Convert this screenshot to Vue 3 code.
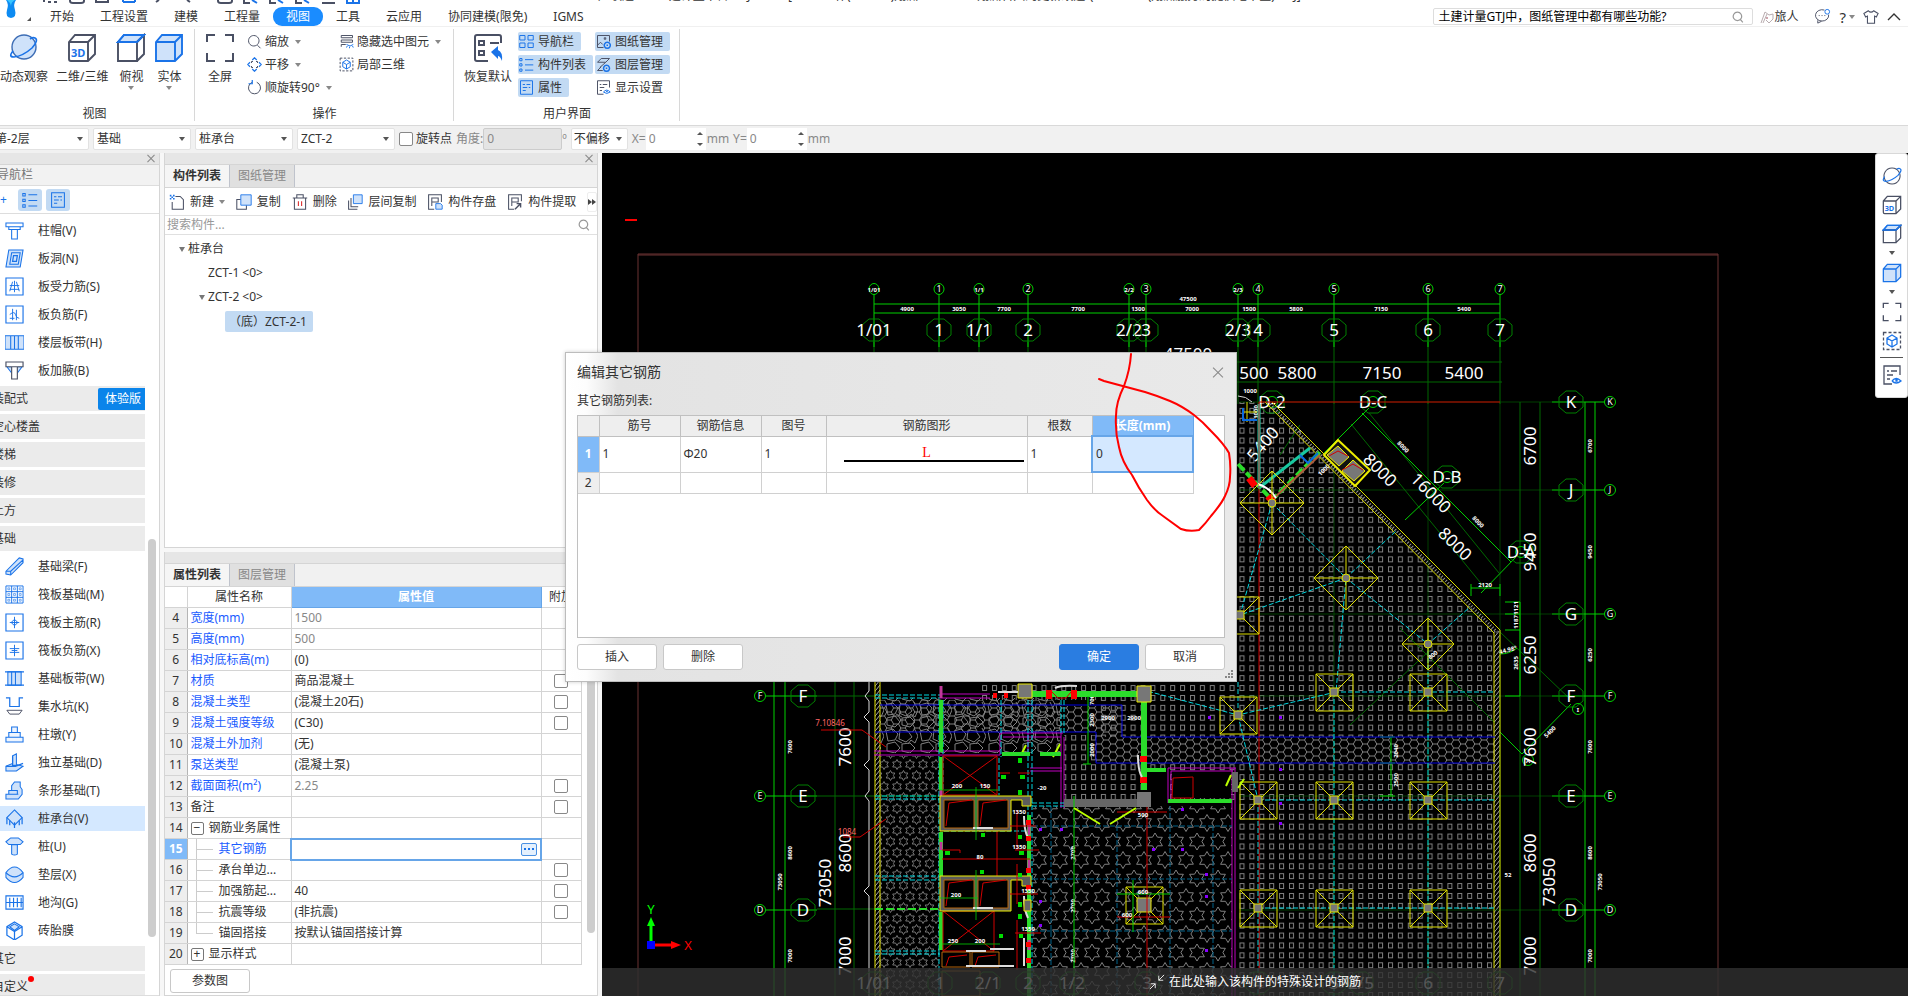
<template>
  <div class="app">
    <!-- Title strip and menu tabs -->
    <header class="topbar">
      <div class="title-strip">
        <svg class="quick-icons" viewBox="0 0 360 4" width="360" height="4" fill="none" stroke="#4a5064" stroke-width="2">
          <path d="M44 0v2M48 2h3M54 2h3M70 0v1q0 2 3 2h8q3 0 3-2V0M96 0v2h12V0M156 2l3-2M187 0l3 2M218 0v1q0 2 3 2h8q3 0 3-2V0M322 3h13M380 0v3h10" />
          <path stroke="#1a73e8" d="M123 2h12M123 0v2M135 0v2M252 0l5 3M278 0l5 3M304 0l5 3M347 0v3h12V0M353 0v3" />
          <path d="M244 0v3h6M270 0v3h6M296 0v3h6" />
        </svg>
        <span class="title-text">广联达BIM土建计量平台 GTJ2021 - [D:\2#工作(1#2-1#)翔洲\2022.4.19翔洲科兴湾更新改造\(2022.4.19(翔洲服务局提供地下室).GTJ]</span>
      </div>
      <svg class="logo" viewBox="0 0 12 18" width="12" height="18">
        <path fill="#0d8bf2" d="M1 0q3 4 1 10q-2 7 4 8q6-1 4-8q-2-6 1-10z" />
        <path fill="#37c6ff" d="M2 0h8q-4 2-4 6q-1-4-4-6z" />
      </svg>
      <span class="corner"></span>
      <nav class="tabs">
        <button v-for="t in menuTabs" :key="t" class="tab" :class="{ active: t === '视图' }">{{ t }}</button>
      </nav>
      <div class="top-right">
        <label class="help-search">
          <input v-model="helpQuery" type="text" aria-label="搜索" />
          <svg viewBox="0 0 20 20" width="12" height="12" v-html="icons.search"></svg>
        </label>
        <button class="user">
          <svg viewBox="0 0 14 14" width="14" height="14" fill="none" stroke="#b9adb0">
            <path d="M1 13l4-11M3 13l4-9M5 2l4 3l4-1v5l-4 4l-3-3" /><path stroke="#9b4a5a" d="M7 7v2" />
          </svg>旅人
        </button>
        <button class="ico-btn" aria-label="消息">
          <svg viewBox="0 0 18 18" width="17" height="17" fill="none" stroke="#4a5064">
            <path d="M11 2.200A7 6 0 1 0 15.500 7M4 13v3l4-2M5 8h1M8 8h1M11 8h1" /><circle cx="14" cy="4" r="2.500" stroke="#1a73e8" />
          </svg>
        </button>
        <button class="ico-btn help">?<i class="arrow"></i></button>
        <button class="ico-btn" aria-label="皮肤">
          <svg viewBox="0 0 18 18" width="16" height="16" fill="none" stroke="#4a5064" stroke-width="1.200">
            <path d="M6 2l-5 3l2 4l2-1v8h8V8l2 1l2-4l-5-3q-3 3-6 0z" />
          </svg>
        </button>
        <button class="ico-btn" aria-label="收起">
          <svg viewBox="0 0 14 9" width="14" height="9" fill="none" stroke="#333" stroke-width="1.400"><path d="M1 8l6-6l6 6" /></svg>
        </button>
      </div>
    </header>

    <!-- Ribbon -->
    <section class="ribbon">
      <div class="group">
        <div class="group-body">
          <button v-for="b in viewButtons" :key="b.label" class="big">
            <svg viewBox="0 0 30 30" width="30" height="30" v-html="icons[b.icon]"></svg>
            <span>{{ b.label }}</span>
            <i v-if="b.arrow" class="arrow"></i>
          </button>
        </div>
        <div class="group-name">视图</div>
      </div>
      <div class="group ops">
        <div class="group-body">
          <button class="big">
            <svg viewBox="0 0 30 30" width="30" height="30" v-html="icons.full"></svg>
            <span>全屏</span>
          </button>
          <div v-for="(col, i) in opColumns" :key="i" class="col">
            <button v-for="b in col" :key="b.label" class="small">
              <svg viewBox="0 0 20 20" width="15" height="15" v-html="icons[b.icon]"></svg>
              <span>{{ b.label }}</span>
              <i v-if="b.arrow" class="arrow"></i>
            </button>
          </div>
        </div>
        <div class="group-name">操作</div>
      </div>
      <div class="group ui">
        <div class="group-body">
          <button class="big">
            <svg viewBox="0 0 30 30" width="30" height="30" v-html="icons.restore"></svg>
            <span>恢复默认</span>
          </button>
          <div v-for="(col, i) in uiColumns" :key="i" class="col">
            <button v-for="b in col" :key="b.label" class="small" :class="{ on: b.on }">
              <svg viewBox="0 0 20 20" width="15" height="15" v-html="icons[b.icon]"></svg>
              <span>{{ b.label }}</span>
            </button>
          </div>
        </div>
        <div class="group-name">用户界面</div>
      </div>
    </section>

    <!-- Floor / component option bar -->
    <section class="options">
      <span v-for="c in combos" :key="c.label" class="combo" :class="c.cls">
        <select :aria-label="c.label"><option>{{ c.value }}</option></select>
        <i class="arrow dark"></i>
      </span>
      <label class="rotate"><input type="checkbox" />旋转点</label>
      <label class="field">角度:<input class="angle" type="text" value="0" disabled />º</label>
      <span class="combo offset">
        <select aria-label="偏移"><option>不偏移</option></select>
        <i class="arrow dark"></i>
      </span>
      <label v-for="axis in ['X', 'Y']" :key="axis" class="field">
        {{ axis }}=<span class="spin"><input type="text" value="0" /><i class="up"></i><i class="down"></i></span>mm
      </label>
    </section>

    <main class="work">
      <!-- Navigation -->
      <aside class="nav">
        <div class="strip"><button class="close" aria-label="关闭"></button></div>
        <div class="nav-head">导航栏</div>
        <div class="nav-tools">
          <span class="plus">+</span>
          <button class="toggle" aria-label="列表"><svg viewBox="0 0 20 20" width="16" height="16" v-html="icons.list"></svg></button>
          <button class="toggle" aria-label="属性"><svg viewBox="0 0 20 20" width="16" height="16" v-html="icons.props"></svg></button>
        </div>
        <div class="nav-list">
          <div class="nav-items">
            <a v-for="n in navItems" :key="n.t" href="#" :class="[n.icon ? 'item' : 'cat', { sel: n.sel }]">
              <svg v-if="n.icon" viewBox="0 0 20 20" width="19" height="19" v-html="icons[n.icon]"></svg>
              <span>{{ n.t }}</span>
              <em v-if="n.badge">{{ n.badge }}</em>
              <b v-if="n.dot"></b>
            </a>
          </div>
          <i class="thumb nav-thumb"></i>
        </div>
      </aside>

      <div class="middle">
        <!-- Component list -->
        <section class="panel tree-panel">
          <div class="strip"><button class="close" aria-label="关闭"></button></div>
          <div class="panel-tabs"><button class="cur">构件列表</button><button>图纸管理</button></div>
          <div class="tools">
            <button v-for="b in listTools" :key="b.label">
              <svg viewBox="0 0 20 20" width="16" height="16" v-html="icons[b.icon]"></svg>{{ b.label }}
              <i v-if="b.arrow" class="arrow"></i>
            </button>
            <button class="more" aria-label="更多"><i></i><i></i></button>
          </div>
          <label class="tree-search">
            <input type="text" placeholder="搜索构件..." />
            <svg viewBox="0 0 20 20" width="12" height="12" v-html="icons.search"></svg>
          </label>
          <ul class="tree">
            <li class="l0"><i class="fold"></i><span>桩承台</span></li>
            <li class="l1"><i class="fold none"></i><span>ZCT-1 &lt;0&gt;</span></li>
            <li class="l1"><i class="fold"></i><span>ZCT-2 &lt;0&gt;</span></li>
            <li class="l2"><span class="picked">（底）ZCT-2-1</span></li>
          </ul>
        </section>

        <!-- Property list -->
        <section class="panel prop-panel">
          <div class="strip"></div>
          <div class="panel-tabs"><button class="cur">属性列表</button><button>图层管理</button></div>
          <div class="prop-wrap">
            <table class="props">
              <colgroup><col class="c-no" /><col class="c-name" /><col class="c-val" /><col class="c-add" /></colgroup>
              <thead><tr><th></th><th>属性名称</th><th class="hot">属性值</th><th>附加</th></tr></thead>
              <tbody>
                <tr v-for="(r, i) in props" :key="i" :class="{ current: i === 11 }">
                  <td class="no">{{ i + 4 }}</td>
                  <td class="name" :class="{ blue: r.blue, child: r.child, last: i === 15 }">
                    <i v-if="r.fold" class="box">{{ r.fold }}</i>{{ r.n }}
                  </td>
                  <td class="val" :class="{ grey: r.grey }">
                    {{ r.v }}<button v-if="i === 11" class="dots" aria-label="编辑"><s></s><s></s><s></s></button>
                  </td>
                  <td class="add"><input v-if="r.c" type="checkbox" :aria-label="r.n" /></td>
                </tr>
              </tbody>
            </table>
            <i class="thumb prop-thumb"></i>
          </div>
          <div class="prop-foot"><button class="plain">参数图</button></div>
        </section>
      </div>

      <!-- Drawing -->
      <section class="canvas">
        <svg class="drawing" viewBox="602 153 1306 843" preserveAspectRatio="xMinYMin slice">
          <defs>
            <pattern id="sq" width="9.900" height="9.900" patternUnits="userSpaceOnUse">
              <path d="M2.500 2.500h4v5h-4z" fill="none" stroke="#808080" />
            </pattern>
            <pattern id="hex" width="14" height="8" patternUnits="userSpaceOnUse">
              <path d="M0 4h2.500l2.300-4h4.500l2.300 4h2.400M2.500 4l2.300 4h4.500l2.300-4" fill="none" stroke="#808080" />
            </pattern>
            <pattern id="stone" width="34" height="26" patternUnits="userSpaceOnUse">
              <path d="M2 3l7-2l5 5l-3 6l-7 1zM16 2l8 1l4 6l-6 5l-7-3zM30 0l4 8l-3 7l-4-3M3 16l8-2l5 6l-5 5l-8-2zM18 16l8-1l5 5l-5 5l-8-2zM12 12l6 3M27 12l-3 4" fill="none" stroke="#808080" />
            </pattern>
            <pattern id="starL" width="21" height="37" patternUnits="userSpaceOnUse">
              <path :d="star(10, 9, 8.5) + star(0, 27.5, 8.5) + star(21, 27.5, 8.5)" fill="none" stroke="#808080" />
            </pattern>
            <pattern id="starS" width="13" height="22" patternUnits="userSpaceOnUse">
              <path :d="star(6.5, 5.5, 5) + star(0, 16.5, 5) + star(13, 16.5, 5)" fill="none" stroke="#757575" />
            </pattern>
            <pattern id="wall" width="4" height="5" patternUnits="userSpaceOnUse">
              <path d="M0 5l4-5" stroke="#aaa" />
            </pattern>
          </defs>

          <path class="frame" d="M638 996V254H1718V996" />
          <path class="frame" d="M638 255H1718" />
          <path d="M625 220h12" stroke="#f00" stroke-width="2" />

          <!-- Hatches -->
          <path fill="url(#sq)" d="M980 682H1238V402H1268L1495 632V996H1235V800H1168V770H1143V800H1064V735H1096V700H980z" />
          <path fill="#000" d="M1096 737H1495V764H1096z" />
          <path fill="url(#hex)" d="M1060 706H1122V737H1495V764H1096V732H1060zM880 700H1060V732H880z" />
          <path fill="url(#stone)" d="M880 698H1060V753H880z" />
          <path fill="url(#starS)" d="M880 756H939V996H880z" />
          <path fill="url(#starL)" d="M1033 806H1232V996H1033z" />
          <path fill="url(#wall)" d="M875 682h5V996h-5zM1494 631h6V996h-6z" />

          <!-- Grid axes -->
          <g class="dim-dark">
            <path v-for="a in axesX" :key="a.x" :d="`M${a.x} 342V404`" />
            <path v-for="x in [1334, 1428, 1500]" :key="x" :d="`M${x} 402V996`" opacity=".6" />
            <path v-for="a in axesY" :key="a.y" :d="`M1240 ${a.y}H1552`" opacity=".6" />
            <path d="M1236 362H1502M1236 382H1502M1520 402V996M1540 402V996M835 682V996M854 682V996" />
            <path d="M817 696H875M817 796H939M817 909H875M1351 424L1484 587M1369 413L1499 573M1350 725L1430 650M1500 632L1571 700M1400 628L1495 723M1280 455L1300 425" />
          </g>
          <g class="dim">
            <path v-for="a in axesX" :key="a.x" :d="`M${a.x} 294V347`" />
            <path d="M874 304H1500M874 313H1500M1585 402V996M1595 402V996M774 682V996M785 682V996" />
            <path v-for="a in axesY" :key="a.y" :d="`M1552 ${a.y}H1604`" />
            <path v-for="a in leftY" :key="a.y" :d="`M766 ${a.y}H817`" />
            <path d="M1369 408L1324 453M1362 413L1511 562M1444 483L1405 520M1516 557L1481 593M1471 588H1500M1471 584v12M1500 584v12M1505 602h15M1505 614h15M1505 630h15M1505 696h15M1520 602V696M1571 704L1522 754L1500 732M1391 737V796M1380 737h15M1380 763h15M1380 796h15M1500 654q10 0 17-6" />
          </g>
          <g class="bubbles">
            <g v-for="a in axesX" :key="a.x">
              <ellipse :cx="a.x" cy="289" rx="5" ry="5.500" />
              <path :d="octagon(a.x, 330)" />
              <text :x="a.x" y="292" class="tiny" :class="{ one: a.t.length === 1 }">{{ a.t }}</text>
              <text :x="a.x" y="336" class="big-t">{{ a.t }}</text>
            </g>
            <g v-for="a in axesY" :key="a.y">
              <circle cx="1610" :cy="a.y" r="5.500" />
              <path :d="octagon(1571, a.y)" />
              <text x="1610" :y="a.y + 3" class="tiny one">{{ a.t }}</text>
              <text x="1571" :y="a.y + 6" class="big-t">{{ a.t }}</text>
            </g>
            <g v-for="a in leftY" :key="a.y">
              <circle cx="760" :cy="a.y" r="5.500" />
              <path :d="octagon(803, a.y)" />
              <text x="760" :y="a.y + 3" class="tiny one">{{ a.t }}</text>
              <text x="803" :y="a.y + 6" class="big-t">{{ a.t }}</text>
            </g>
            <g v-for="a in diagonal" :key="a.t">
              <path :d="octagon(a.x, a.y)" />
              <circle :cx="a.x" :cy="a.y" r="5.500" />
              <text :x="a.x" :y="a.y + 6" class="big-t">{{ a.t }}</text>
            </g>
            <circle cx="1578" cy="709" r="5.500" /><text x="1578" y="712" class="tiny">I</text>
            <circle cx="1528" cy="760" r="5.500" /><text x="1528" y="763" class="tiny">A</text>
          </g>

          <!-- Dimension figures -->
          <text v-for="(d, i) in bigDims" :key="'b' + i" class="big-t" :transform="`translate(${d[0]} ${d[1]}) rotate(${d[3]})`" y="6">{{ d[2] }}</text>
          <text v-for="(d, i) in turnedDims" :key="'t' + i" class="tiny" :transform="`translate(${d[0]} ${d[1]}) rotate(${d[3]})`" y="2">{{ d[2] }}</text>

          <!-- Outer walls -->
          <g class="yellow">
            <path d="M875 682V996M880 682V996M1265 402L1494 633V996M1272 402L1500 630V996" />
            <path d="M1268 402L1497 632" stroke="#999" stroke-dasharray="1 2" stroke-width="3" />
            <path d="M1243 412h14M1247 402v20" />
          </g>
          <path class="white" d="M869 682V691l-4 5l4 5v11l-5 5l5 5v38l-5 5l5 5v21l-4 5l4 5v85l-5 5l5 5v100M1238 396q8 0 14 6M1300 433v-3" />
          <path class="red" d="M1259 402V996M1259 402H1500M821 730h41l24 17M843 837h17l26-18" />
          <text x="830" y="726" class="red-t">7.10846</text>
          <text x="847" y="835" class="red-t">1084</text>

          <!-- Beams, bands -->
          <path class="blue" d="M1122 737H1495M1096 763H1495M880 705H1122V737M875 732H1096V763" />
          <path class="magenta" d="M940 694H990M940 698H990M874 751H1000M874 755H1000M1000 733H1063M1003 737H1061M1061 733V808M1064 737V808M1000 733V755M1028 733V772M1030 771H1062M1030 768H1062M1168 768V803M1171 771V803M1168 768H1236M1171 771H1233M1232 768V996M1235 768V996" />
          <path fill="#666" d="M1064 799H1140V807H1064zM1232 772h6v20h-6z" />
          <path class="cyan" :d="cyanLines" />
          <path class="teal" d="M1033 826H1232M1033 879H1232M1033 931H1232M1051 806V996M1117 826V996M1170 806V996M1213 826V996" />

          <!-- Diagonal corner -->
          <g stroke-width="5" fill="none">
            <path stroke="#18c8a0" d="M1259 488L1310 448" stroke-width="3" />
            <path stroke="#2bdc2b" d="M1238 464L1272 500L1320 452" stroke-width="4" stroke-dasharray="9 3" />
            <path stroke="#b05a3a" d="M1272 500L1320 455" stroke-width="2" />
            <path stroke="#18c8a0" d="M1259 404V488" stroke-width="3" /><path stroke="#c22" d="M1259 404V488" stroke-width="1" />
            <path stroke="#f00" stroke-width="7" d="M1249 478l6 8M1268 496l6 7" />
            <path stroke="#fff" stroke-width="2" d="M1258 484q12 4 18 14" />
            <path stroke="#0a6ae0" stroke-width="2" d="M1243 408v12h14M1300 455l8 8l10-10" />
          </g>
          <path d="M1338 440L1370 470L1355 486L1324 455z" fill="#111" stroke="#ee0" stroke-width="2" />
          <path d="M1338 446l11 11l-10 9l-12-11zM1353 460l12 11l-11 10l-12-10z" fill="#777" stroke="#ee0" />
          <path class="red" d="M1329 456l9-5l10 5M1342 470l11-6l10 6" />

          <!-- Pile caps -->
          <g v-for="(f, i) in footings" :key="'f' + i" class="yellow">
            <path :d="`M${f[0] - 18} ${f[1] - 18}h37v37h-37zl37 37M${f[0] + 19} ${f[1] - 18}l-37 37`" />
            <rect :x="f[0] - f[2] / 2" :y="f[1] - f[2] / 2" :width="f[2]" :height="f[2]" fill="#777" />
          </g>
          <g v-for="(f, i) in diamonds" :key="'d' + i" class="yellow">
            <path :d="`M${f[0]} ${f[1] - f[2]}l${f[2]} ${f[2]}l${-f[2]} ${f[2]}l${-f[2]} ${-f[2]}zv${f[2] * 2}M${f[0] - f[2]} ${f[1]}h${f[2] * 2}`" />
            <circle :cx="f[0]" :cy="f[1]" r="4" fill="#777" />
          </g>

          <!-- Columns and beams above the open court -->
          <path stroke="#2bdc2b" stroke-width="6" d="M1032 694H1142M1144 702V790" />
          <path stroke="#2bdc2b" stroke-width="4" d="M1168 801H1232M1145 770H1166" />
          <path fill="#000" d="M1172 772H1231V798H1172zM1032 773H1060V805H1032z" />
          <path fill="#f00" d="M1046 690h6v9h-6zM1071 690h6v9h-6zM1140 756h7v6h-7zM1140 777h7v6h-7zM993 693h4v5h-4zM1004 693h4v5h-4z" />
          <path class="red" d="M1052 692l6 6h8l5-6M1172 798l1-20l20-1v21zM1147 806V996M1117 812h50M1117 917h53" />
          <path class="dim" d="M1074 796V996M1117 894h53M1133 880v52M1088 696v68M1083 764h8" />
          <path fill="#777" stroke="#ee0" d="M1137 686h14v16h-14zM1018 684h14v14h-14z" />
          <path fill="#777" d="M1137 792h14v15h-14z" />
          <path stroke="#bf0" stroke-width="2" fill="none" d="M1074 808l26 16M1110 824l26-16M1226 786l5-11M1238 788l6-9M1020 757l6-12M1053 757l7-13" />
          <path class="white thick" d="M1055 688q6-3 22-2M998 692h20M1138 755q0 16 4 22" />

          <!-- Stair core -->
          <path fill="#000" d="M940 756H1030V996H940z" />
          <path class="cyan" d="M875 695H940M875 698H940M875 796H940M875 799H940M875 876H940M875 880H940M875 951H940M875 954H940M939 700V996M943 700V795M1001 700V757M999 758V795M1028 700V996M1032 700V996M1032 803H1064M1032 806H1064M1061 700V735M1064 700V735M944 831H1028" />
          <path stroke="#2bdc2b" stroke-width="4" d="M941 700V752M941 757V790M941 832V876M941 912V950M1029 815V996M1002 754H1030M1040 754H1061" fill="none" />
          <path stroke="#2bdc2b" stroke-width="2" stroke-dasharray="8 3" d="M875 909H939" />
          <path stroke="#c0389a" stroke-width="3" fill="none" d="M941 686V698M941 790V796M941 842V850M1029 825v10M1029 860v10M1029 940v10" />
          <path class="red" d="M943 756H997V795H943zL997 795M997 756L943 795M943 911H994V951H943zL994 951M994 911L943 951M942 859H1030M997 831V876" />
          <g v-for="y in [796, 876]" :key="y">
            <path :d="`M940 ${y}H1031V${y + 10}H1022V${y + 4}H1011V${y + 35}H940z`" fill="#5c5c5c" stroke="#ee0" />
            <path :d="`M944 ${y + 4}H974V${y + 32}H944zM978 ${y + 4}H1008V${y + 32}H978z`" fill="#000" stroke="#b5650d" />
            <path class="red" :d="`M946 ${y + 30}l3-23l23-3M980 ${y + 30}l3-23l23-3`" />
            <path class="white thick" :d="`M973 ${y + 32}h20M1024 ${y + 20}q0 14 4 22`" />
          </g>
          <path fill="#666" stroke="#ee0" d="M1024 900h7v11h-7z" />
          <path fill="#000" stroke="#b5650d" d="M942 952H970V967H942zM972 952H999V967H972zM942 971H980V996H942z" />
          <path class="red" d="M946 966l3-9l18-2M975 966l3-9l18-2M1000 773h10M1018 773h12M1010 826h26M1015 850h24M1017 810v40M1010 894h28M1017 864v40M1015 933h26M1017 920v50M942 850h18v3" />
          <path class="white thick" d="M966 951h20M990 949h24M966 966h48M1024 938v28" />
          <path class="dim" d="M939 790H998M940 898H978M942 944H1000M976 787V840M976 870V920" opacity=".8" />
          <path fill="#0d0" d="M1001 775h5v4h-5zM1020 775h5v4h-5zM1018 758h4v5h-4zM1018 790h4v5h-4zM981 833h4v4h-4zM1018 835h4v4h-4zM945 851h5v4h-5zM1019 851h5v4h-5zM980 870h4v4h-4zM1018 873h4v4h-4zM1018 902h4v5h-4zM1018 914h4v5h-4zM999 934h4v4h-4zM1019 934h4v4h-4z" />
          <path fill="#f00" d="M1026 820h5v5h-5zM1026 836h5v5h-5zM1026 868h5v5h-5zM1026 885h5v5h-5zM1026 942h5v5h-5zM1026 958h5v5h-5z" />
          <path fill="#80f" d="M1208 716h3v3h-3zM1279 716h3v3h-3zM1279 768h3v3h-3zM1279 802h3v3h-3zM1279 822h3v3h-3zM1181 808h3v3h-3zM1181 848h3v3h-3zM1152 848h3v3h-3zM1205 873h3v3h-3zM1205 895h3v3h-3zM1205 949h3v3h-3zM1039 828h3v3h-3zM1060 828h3v3h-3zM1039 900h3v3h-3zM1039 924h3v3h-3z" />
          <text v-for="(d, i) in smallDims" :key="'s' + i" :x="d[0]" :y="d[1]" class="tiny">{{ d[2] }}</text>

          <!-- Lower axis bubbles -->
          <g v-for="a in bottomX" :key="a.x" class="bubbles">
            <path :d="octagon(a.x, 983)" />
            <text :x="a.x" y="989" class="big-t">{{ a.t }}</text>
          </g>

          <!-- UCS icon -->
          <path stroke="#0f0" stroke-width="3" d="M651 941V924" /><path fill="#0f0" d="M651 917l4 9h-8z" />
          <path stroke="#f00" stroke-width="3" d="M654 945H672" /><path fill="#f00" d="M681 945l-10-4v8z" />
          <path fill="#00f" d="M647 941h8v8h-8z" />
          <text x="651" y="914" class="ucs">Y</text>
          <text x="688" y="950" class="ucs">X</text>
        </svg>
        <div class="hint">
          <svg viewBox="0 0 18 18" width="16" height="16" fill="none" stroke="#fff"><path d="M17 1l-6 6M11 2v5h5M1 17l6-6M2 11h5v5" /></svg>
          在此处输入该构件的特殊设计的钢筋
        </div>
        <div class="side-tools">
          <template v-for="(s, i) in sideTools" :key="i">
            <i v-if="s === 'arrow'" class="arrow dark"></i>
            <hr v-else-if="s === 'line'" />
            <button v-else :aria-label="s"><svg :viewBox="s === 'local' || s === 'display' ? '0 0 20 20' : '0 0 30 30'" width="20" height="20" v-html="icons[s]"></svg></button>
          </template>
        </div>
      </section>
    </main>

    <!-- Rebar dialog -->
    <div class="dialog" role="dialog" aria-label="编辑其它钢筋">
      <div class="dlg-head"><span>编辑其它钢筋</span><button class="close dlg-close" aria-label="关闭"></button></div>
      <div class="dlg-label">其它钢筋列表:</div>
      <div class="dlg-grid">
        <table>
          <thead>
            <tr>
              <th class="g-no"></th><th class="g-a">筋号</th><th class="g-a">钢筋信息</th><th class="g-b">图号</th>
              <th class="g-c">钢筋图形</th><th class="g-b">根数</th><th class="g-d hot">长度(mm)</th>
            </tr>
          </thead>
          <tbody>
            <tr class="r1">
              <td class="no hot">1</td><td>1</td><td>Φ20</td><td>1</td>
              <td class="shape"><span>L</span><hr /></td><td>1</td><td class="edit">0</td>
            </tr>
            <tr class="r2"><td class="no">2</td><td></td><td></td><td></td><td></td><td></td><td></td></tr>
          </tbody>
        </table>
      </div>
      <div class="dlg-foot">
        <button class="plain">插入</button><button class="plain">删除</button>
        <button class="plain ok">确定</button><button class="plain">取消</button>
      </div>
      <svg class="grip" viewBox="0 0 9 9" width="9" height="9" fill="#888"><path d="M6 0h2v2H6zM3 3h2v2H3zM6 3h2v2H6zM0 6h2v2H0zM3 6h2v2H3zM6 6h2v2H6z" /></svg>
      <svg class="scribble" viewBox="1095 350 140 185" width="140" height="185" fill="none" stroke="#f00" stroke-width="2" stroke-linecap="round">
        <path d="M1131 354Q1130 370 1124 386Q1116 402 1116 416Q1115 432 1119 447Q1122 462 1132 475Q1138 487 1147 500Q1155 511 1163 516L1181 529Q1190 532 1199 530Q1206 523 1211 516Q1222 503 1225 496Q1230 486 1230 477Q1231 465 1229 453Q1224 444 1211 431Q1203 422 1194 415Q1182 406 1170 401Q1158 396 1145 392L1104 381L1099 379" />
      </svg>
    </div>
  </div>
</template>

<script setup>
import { ref } from 'vue';

const helpQuery = ref('土建计量GTJ中，图纸管理中都有哪些功能?');

const menuTabs = ['开始', '工程设置', '建模', '工程量', '视图', '工具', '云应用', '协同建模(限免)', 'IGMS'];

const viewButtons = [
  { label: '动态观察', icon: 'orbit' },
  { label: '二维/三维', icon: 'cube3d' },
  { label: '俯视', icon: 'cubeTop', arrow: true },
  { label: '实体', icon: 'cubeSolid', arrow: true },
];

const opColumns = [
  [
    { label: '缩放', icon: 'zoom', arrow: true },
    { label: '平移', icon: 'pan', arrow: true },
    { label: '顺旋转90°', icon: 'rotate', arrow: true },
  ],
  [
    { label: '隐藏选中图元', icon: 'hide', arrow: true },
    { label: '局部三维', icon: 'local' },
  ],
];

const uiColumns = [
  [
    { label: '导航栏', icon: 'grid', on: true },
    { label: '构件列表', icon: 'list', on: true },
    { label: '属性', icon: 'props', on: true },
  ],
  [
    { label: '图纸管理', icon: 'sheet', on: true },
    { label: '图层管理', icon: 'layers', on: true },
    { label: '显示设置', icon: 'display' },
  ],
];

const combos = [
  { label: '楼层', value: '第-2层', cls: 'first' },
  { label: '分类', value: '基础' },
  { label: '构件类型', value: '桩承台' },
  { label: '构件', value: 'ZCT-2' },
];

const listTools = [
  { label: '新建', icon: 'newDoc', arrow: true },
  { label: '复制', icon: 'copy' },
  { label: '删除', icon: 'trash' },
  { label: '层间复制', icon: 'copy2' },
  { label: '构件存盘', icon: 'save' },
  { label: '构件提取', icon: 'extract' },
];

const sideTools = ['orbitThin', 'cube3d', 'cubeTop', 'arrow', 'cubeSolid', 'arrow', 'full', 'local', 'line', 'display'];

const navItems = [
  { t: '柱帽(V)', icon: 'cap' },
  { t: '板洞(N)', icon: 'hole' },
  { t: '板受力筋(S)', icon: 'rebarS' },
  { t: '板负筋(F)', icon: 'rebarF' },
  { t: '楼层板带(H)', icon: 'band' },
  { t: '板加腋(B)', icon: 'haunch' },
  { t: '装配式', badge: '体验版' },
  { t: '空心楼盖' },
  { t: '楼梯' },
  { t: '装修' },
  { t: '土方' },
  { t: '基础' },
  { t: '基础梁(F)', icon: 'beam' },
  { t: '筏板基础(M)', icon: 'raft' },
  { t: '筏板主筋(R)', icon: 'rebarR' },
  { t: '筏板负筋(X)', icon: 'rebarX' },
  { t: '基础板带(W)', icon: 'strip' },
  { t: '集水坑(K)', icon: 'sump' },
  { t: '柱墩(Y)', icon: 'pier' },
  { t: '独立基础(D)', icon: 'isolated' },
  { t: '条形基础(T)', icon: 'stripBase' },
  { t: '桩承台(V)', icon: 'pileCap', sel: true },
  { t: '桩(U)', icon: 'pile' },
  { t: '垫层(X)', icon: 'cushion' },
  { t: '地沟(G)', icon: 'trench' },
  { t: '砖胎膜', icon: 'brick' },
  { t: '其它' },
  { t: '自定义', dot: true },
];

const props = [
  { n: '宽度(mm)', v: '1500', blue: true, grey: true },
  { n: '高度(mm)', v: '500', blue: true, grey: true },
  { n: '相对底标高(m)', v: '(0)', blue: true },
  { n: '材质', v: '商品混凝土', blue: true, c: true },
  { n: '混凝土类型', v: '(混凝土20石)', blue: true, c: true },
  { n: '混凝土强度等级', v: '(C30)', blue: true, c: true },
  { n: '混凝土外加剂', v: '(无)', blue: true },
  { n: '泵送类型', v: '(混凝土泵)', blue: true },
  { n: '截面面积(m²)', v: '2.25', blue: true, grey: true, c: true },
  { n: '备注', v: '', c: true },
  { n: '钢筋业务属性', v: '', fold: '−' },
  { n: '其它钢筋', v: '', blue: true, child: true },
  { n: '承台单边...', v: '', child: true, c: true },
  { n: '加强筋起...', v: '40', child: true, c: true },
  { n: '抗震等级', v: '(非抗震)', child: true, c: true },
  { n: '锚固搭接', v: '按默认锚固搭接计算', child: true },
  { n: '显示样式', v: '', fold: '+' },
];

/* ---- drawing data ---- */
const axesX = [
  { x: 874, t: '1/01' }, { x: 939, t: '1' }, { x: 979, t: '1/1' }, { x: 1028, t: '2' },
  { x: 1129, t: '2/2' }, { x: 1146, t: '3' }, { x: 1238, t: '2/3' }, { x: 1258, t: '4' },
  { x: 1334, t: '5' }, { x: 1428, t: '6' }, { x: 1500, t: '7' },
];
const axesY = [
  { y: 402, t: 'K' }, { y: 490, t: 'J' }, { y: 614, t: 'G' },
  { y: 696, t: 'F' }, { y: 796, t: 'E' }, { y: 910, t: 'D' },
];
const leftY = axesY.slice(3);
const diagonal = [
  { x: 1272, y: 402, t: 'D-2' }, { x: 1373, y: 402, t: 'D-C' },
  { x: 1447, y: 477, t: 'D-B' }, { x: 1521, y: 552, t: 'D-A' },
];
const bottomX = [
  { x: 874, t: '1/01' }, { x: 940, t: '1' }, { x: 988, t: '2/1' }, { x: 1028, t: '2' },
  { x: 1072, t: '1/2' }, { x: 1147, t: '3' }, { x: 1258, t: '4' }, { x: 1334, t: '5' },
  { x: 1361, t: '2/5' }, { x: 1428, t: '6' }, { x: 1500, t: '7' },
];
const smallDims = [
  [1188, 301, '47500'], [907, 311, '4900'], [959, 311, '3050'], [1004, 311, '7700'], [1078, 311, '7700'],
  [1138, 311, '1300'], [1192, 311, '7000'], [1249, 311, '1500'], [1296, 311, '5800'], [1381, 311, '7150'],
  [1464, 311, '5400'], [1250, 393, '1000'], [1485, 587, '2120'], [1108, 720, '2900'], [1134, 720, '2900'],
  [1042, 790, '-20'], [957, 788, '200'], [985, 788, '150'], [1019, 814, '1350'], [1019, 849, '1350'],
  [956, 897, '200'], [1028, 893, '1350'], [1028, 931, '1350'], [953, 943, '250'], [980, 943, '200'],
  [1143, 817, '500'], [1143, 894, '600'], [1127, 917, '600'], [1508, 877, '52'], [980, 859, '80'],
];
const bigDims = [
  [1188, 354, '47500', 0], [1249, 373, '1500', 0], [1297, 373, '5800', 0], [1382, 373, '7150', 0], [1464, 373, '5400', 0],
  [1530, 446, '6700', -90], [1530, 552, '9450', -90], [1530, 655, '6250', -90], [1530, 747, '7600', -90],
  [1530, 853, '8600', -90], [1549, 882, '73050', -90], [1530, 956, '7000', -90],
  [845, 747, '7600', -90], [845, 853, '8600', -90], [825, 883, '73050', -90], [845, 956, '7000', -90],
  [1380, 470, '8000', 45], [1431, 493, '16000', 45], [1455, 544, '8000', 45], [1263, 444, '5400', -50],
];
const turnedDims = [
  [1590, 446, '6700', -90], [1590, 552, '9450', -90], [1590, 655, '6250', -90], [1590, 747, '7600', -90],
  [1590, 853, '8600', -90], [1600, 882, '73050', -90], [1590, 956, '7000', -90],
  [790, 747, '7600', -90], [790, 853, '8600', -90], [780, 882, '73050', -90], [790, 956, '7000', -90],
  [1403, 447, '8000', 45], [1478, 522, '8000', 45], [1550, 732, '5400', -45], [1324, 470, '1000', -45],
  [1516, 608, '1121', -90], [1516, 622, '1187', -90], [1516, 663, '2635', -90], [1396, 751, '2040', -90],
  [1396, 780, '2500', -90], [1433, 655, '800', -40], [1508, 650, '44.98°', -15], [1256, 412, '1000', -90],
  [1092, 700, '700', -90], [1092, 720, '2300', -90], [1092, 750, '2000', -90], [1073, 853, '2700', -90],
  [1073, 906, '2700', -90], [1073, 956, '2700', -90],
];
const footings = [
  [1334, 692, 8], [1428, 692, 8], [1238, 715, 8], [1240, 615, 8], [1258, 800, 8], [1334, 800, 8], [1428, 800, 8],
  [1258, 908, 8], [1334, 908, 8], [1428, 908, 8], [1144, 905, 14],
];
const diamonds = [[1428, 644, 26], [1346, 578, 32], [1272, 503, 32]];

const cyanLines = 'M1272 503L1346 578L1428 644L1470 607M1272 503L1240 615L1346 578L1336 692L1238 715L1143 690'
  + 'M1346 578L1397 530M1238 715L1258 800M1334 692H1494M1258 800H1494M1258 908H1494M1334 692V996M1428 644V996M1258 800V996'
  + 'M1238 682V715';

/** Octagonal axis bubble outline. */
const octagon = (x, y) => `M${x - 5} ${y - 11}h10l7 6v10l-7 6h-10l-7-6v-10z`;

/** Six-pointed star outline used in the slab hatches. */
const star = (cx, cy, r) => {
  const pts = [];
  for (let i = 0; i < 12; i++) {
    const rad = i % 2 ? r * 0.58 : r;
    const a = (Math.PI / 6) * i - Math.PI / 2;
    pts.push(`${(cx + rad * Math.cos(a)).toFixed(1)} ${(cy + rad * Math.sin(a)).toFixed(1)}`);
  }
  return `M${pts.join('L')}z`;
};

/* ---- icons ---- */
const ink = (d, w = 1.3) => `<path d="${d}" fill="none" stroke="#4a5064" stroke-width="${w}"/>`;
const blue = (d, w = 1.3) => `<path d="${d}" fill="none" stroke="#1a73e8" stroke-width="${w}"/>`;
const tint = (d, w = 1.1) => `<path d="${d}" fill="#cfe2fa" stroke="#1a73e8" stroke-width="${w}"/>`;
const frame = blue('M1 1h18v18h-18z', 1.2);
const cubeBody = 'M2 9h19v19h-19zM21 9l7-7v19l-7 7';

const icons = {
  orbit: '<circle cx="15" cy="14" r="12" fill="#cfe2fa" stroke="#3d6db5" stroke-width="1.4"/>' + blue('M4 18q-5 6 1 6q9-1 18-9q7-8 3-10q-2-1-5 1', 1.6),
  orbitThin: ink('M15 3a12 12 0 1 0 .1 0z', 1.6) + blue('M4 16q-5 7 2 7q9-1 18-9q7-8 3-10q-2-1-5 1', 1.8),
  cube3d: ink('M2 9l6-7h20v19l-7 7h-17q-2 0-2-2zM2 9h19v19M21 9l7-7', 1.9) + '<text x="4" y="24" font-size="11" font-weight="bold" font-family="Noto Sans" fill="#1a73e8">3D</text>',
  cubeTop: tint('M2 9l6-7h20l-7 7z', 1.9) + ink(cubeBody, 1.9) + blue('M2 9l6-7h20l-7 7z', 1.9),
  cubeSolid: tint('M2 9l6-7h20v19l-7 7h-19zM2 9h19v19M21 9l7-7', 1.9),
  full: ink('M2 9V2h8M20 2h8v7M28 20v8h-8M10 28H2v-8', 2),
  restore: ink('M28 10V4q0-2-2-2H4q-2 0-2 2v22q0 2 2 2h11M17 10h9M6 8h5v4h-5zM6 18h5v4h-5z', 2) + '<path d="M18 19l7-6v4q5 2 4 11q-2-5-4-5v3z" fill="#1a73e8"/>',
  search: '<path d="M9 2a7 7 0 1 0 .1 0zM14 14l4 5" fill="none" stroke="#999" stroke-width="2"/>',
  zoom: ink('M9 2a7 7 0 1 0 .1 0zM14 15l4 4'),
  pan: blue('M7 4l3-3l3 3M7 16l3 3l3-3M4 7l-3 3l3 3M16 7l3 3l-3 3', 1.6) + ink('M6 8V6h2M12 6h2v2M14 12v2h-2M8 14H6v-2'),
  rotate: ink('M13 3a8 8 0 1 1-6 0') + blue('M7 0v5h-5', 1.6),
  hide: ink('M3 2h15v3h-15zM3 8h15v3h-15zM3 17v-3h6') + blue('M10 14q5 4 9 0M11 16l-1 2M14 17v2M18 16l1 2'),
  local: '<path d="M1.500 1.500h17v17h-17z" fill="none" stroke="#4a5064" stroke-width="1.300" stroke-dasharray="3 2"/>' + blue('M10 4l5 3v6l-5 3l-5-3V7zM5 7l5 3l5-3M10 10v6'),
  grid: blue('M1 2h7v6h-7zM12 2h7v6h-7zM1 12h7v6h-7zM12 12h7v6h-7z'),
  list: blue('M1 2h3v3h-3zM1 9h3v3h-3zM1 16h3v3h-3zM8 3.500h11M8 10.500h11M8 17.500h11'),
  props: blue('M2 1h16v18h-16zM5 6h3M10 6h5M5 10h6M13 10h2M5 14h4'),
  sheet: ink('M10 18H2V2h16v8M2 15l4-4l3 3M11 5h2v2h-2z') + blue('M15 11a4 4 0 1 0 .1 0zM15 14v2', 2),
  layers: ink('M7 2h11l-5 5h-11zM9 18H2l5-5M13 7l-8 7') + blue('M14 11a4 4 0 1 0 .1 0zM14 14v2', 2),
  display: ink('M10 19H2V1h16v9M5 6h2M9 6h6M5 10h6M5 14h3') + blue('M10 16q4-5 9 0q-5 4-9 0M14 15h1v1h-1z'),
  newDoc: ink('M8 3h6l4 4v12h-14v-9') + '<path d="M1 1h2v2h-2zM5 1h2v2h-2zM3 3h2v2h-2zM1 5h2v2h-2zM5 5h2v2h-2z" fill="#1a73e8"/>',
  copy: ink('M6 7H1v12h12v-5') + tint('M6 1h13v13h-13z'),
  trash: ink('M1 5h18M3 5v14h14V5M6 5V1h8v4') + '<path d="M8 9v6M12 9v6" stroke="#d33" stroke-width="1.400"/>',
  copy2: ink('M2 8v11h11M5 5v11h9') + tint('M8 1h11v11h-11z'),
  save: ink('M9 19H2V1h16v9M6 15V5h8v5H6') + tint('M11 12h6l2 2v5h-8z'),
  extract: ink('M9 19H2V1h16v8M6 15V5h8v5H6') + ink('M10 19l7-7M12 12h5v5', 1.8),
  cap: tint('M1 2h18v4h-18zM4 6h12v3h-12zM7 9h6v10h-6z').replace(/#cfe2fa/, '#fff'),
  hole: tint('M4 1h15l-3 18H1zM7 4h9l-2 12H5z') + blue('M9 7h4l-1 6H8z'),
  rebarS: frame + blue('M5 9h10M5 13h10M8 5l-3 10M12 5l3 10M10 4v12', 1),
  rebarF: frame + blue('M8 4v12M12 5v11M5 10q5-4 6 0t4 4M5 14h5', 1),
  band: tint('M0 3h20v14h-20zM6 3v14M10 3v14M14 3v14'),
  haunch: tint('M2 6h16l-6 8H8z') + '<path d="M1 1h18v5h-18zM7 6h6v13h-6z" fill="#fff" stroke="#4a5064" stroke-width="1.200"/>',
  beam: tint('M1 15L15 1l4 1v4L6 19l-5-1zM1 15h5v4M6 15L19 3'),
  raft: blue('M1 1h18v18h-18zM1 7h18M1 13h18M7 1v18M13 1v18M4 4h0', 1) + blue('M3 3h2v2h-2zM9 3h2v2h-2zM15 3h2v2h-2zM3 9h2v2h-2zM9 9h2v2h-2zM15 9h2v2h-2zM3 15h2v2h-2zM9 15h2v2h-2zM15 15h2v2h-2z', 0.6),
  rebarR: frame + blue('M10 4v12M10 7q-6 3 0 6q6-3 0-6M5 10h10', 1),
  rebarX: frame + blue('M5 8h10M5 12h10M10 4v12M7 10h6', 1),
  strip: tint('M3 3h14v14h-14zM7 3v14M11 3v14') + blue('M0 3h20M0 17h20'),
  sump: blue('M1 1h4v9h10V1h4') + ink('M2 14h16l-3 4h-10z', 1),
  pier: tint('M7 2h6v6h-6zM4 8h12v5h-12zM1 13h18v5h-18z').replace(/#cfe2fa/, '#eef5fe'),
  isolated: tint('M1 14l7-3V3l4-2v11l7 2l-7 5H1z') + blue('M8 3v10h4M1 14h10l8-3'),
  stripBase: tint('M1 14h3v-4h3V5l3-4h6v5l2 3v5l-4 5H1zM4 14h10M7 10h6v4'),
  pileCap: tint('M10 1l8 8l-8 8l-8-8z') + blue('M2 9v7M5 12v5M10 14v6M15 12v5M18 9v7'),
  pile: tint('M1 5l5-4h8l5 4l-3 3h-3v10q-3 2-6 0V8H4z') + blue('M7 8h6'),
  cushion: tint('M1 8q9-12 18 0v5q-9 11-18 0z') + blue('M1 8q9 9 18 0'),
  trench: blue('M1 3h18v14h-18zM5 5v10M9 5v10M13 5v10M17 5v10M1 10h18', 1.2),
  brick: blue('M10 1l8 5v9l-8 5l-8-5V6zM2 6l8 5l8-5M10 11v8') + tint('M10 3l5 3l-5 4l-5-4z'),
};
</script>

<style>
html,
body {
  margin: 0;
  overflow: hidden;
}
</style>

<style scoped>
.app {
  position: relative;
  display: flex;
  flex-direction: column;
  height: 100vh;
  overflow: hidden;
  background: #fff;
  color: #333;
  font: 12px/16px 'Noto Sans', 'Noto Sans CJK SC', sans-serif;
}

.app *,
.app *::before,
.app *::after {
  box-sizing: border-box;
}

button,
input,
select {
  margin: 0;
  padding: 0;
  border: 0;
  background: none;
  color: inherit;
  font: inherit;
  white-space: nowrap;
}

svg {
  flex: none;
}

.arrow {
  flex: none;
  width: 0;
  height: 0;
  border: 3px solid transparent;
  border-top: 4px solid #888;
  border-bottom: 0;
}

.arrow.dark {
  border-top-color: #555;
}

/* Top bar */
.topbar {
  position: relative;
  display: flex;
  flex: none;
  align-items: flex-end;
  height: 27px;
  border-bottom: 1px solid #f0f0f0;
}

.title-strip {
  position: absolute;
  top: 0;
  left: 0;
  right: 0;
  display: flex;
  align-items: flex-end;
  height: 4px;
  overflow: hidden;
}

.title-text {
  margin-left: 238px;
  white-space: nowrap;
}

.logo {
  position: absolute;
  top: 0;
  left: 5px;
}

.corner {
  position: absolute;
  left: 27px;
  top: 17px;
  border: 2px solid transparent;
  border-right-color: #555;
  border-bottom-color: #555;
}

.tabs {
  display: flex;
  flex: 1;
  padding-left: 37px;
}

.tab {
  height: 19px;
  padding: 0 13px;
}

.tab.active {
  border-radius: 9px;
  background: #1a8cff;
  color: #fff;
}

.top-right {
  display: flex;
  align-items: center;
  height: 26px;
  padding: 7px 7px 0 0;
  color: #333;
}

.help-search {
  display: flex;
  align-items: center;
  width: 320px;
  height: 17px;
  margin-right: 7px;
  padding: 0 8px 0 4px;
  border: 1px solid #ddd;
  border-radius: 2px;
}

.help-search input {
  flex: 1;
  min-width: 0;
  color: #000;
  outline: none;
}

.user {
  display: flex;
  align-items: center;
  margin-right: 16px;
}

.ico-btn {
  display: flex;
  align-items: center;
  margin-right: 8px;
}

.ico-btn:last-child {
  margin-right: 0;
}

.help {
  gap: 3px;
  font-size: 15px;
}

/* Ribbon */
.ribbon {
  display: flex;
  flex: none;
  height: 98px;
}

.group {
  position: relative;
  display: flex;
  flex-direction: column;
  justify-content: space-between;
  width: 195px;
  padding: 5px 0 3px;
}

.group::after {
  content: '';
  position: absolute;
  top: 2px;
  right: 0;
  bottom: 4px;
  width: 1px;
  background: #d8d8d8;
}

.group.ops {
  width: 259px;
}

.group.ui {
  width: 226px;
}

.group-body {
  display: flex;
  gap: 8px;
}

.ops .group-body {
  gap: 11px;
  padding-left: 10px;
}

.ui .group-body {
  gap: 2px;
  padding-left: 10px;
}

.big {
  display: flex;
  flex: none;
  flex-direction: column;
  align-items: center;
  padding-top: 1px;
}

.big span {
  margin-top: 6px;
}

.big .arrow {
  margin-top: 1px;
}

.ui .big {
  margin-right: 4px;
}

.col {
  display: flex;
  flex-direction: column;
  align-items: flex-start;
  gap: 4px;
}

.ops .col:nth-child(2) {
  width: 81px;
}

.small {
  display: flex;
  align-items: center;
  height: 19px;
  padding: 0 7px 0 1px;
  border-radius: 2px;
}

.small span {
  margin-left: 4px;
}

.small .arrow {
  margin-left: 6px;
}

.ops .small span {
  margin-left: 3px;
}

.small.on {
  background: #c2daf3;
}

.group-name {
  text-align: center;
}

.group:first-child .group-name {
  padding-right: 6px;
}

/* Options */
.options {
  display: flex;
  flex: none;
  align-items: center;
  gap: 4px;
  height: 28px;
  padding-bottom: 2px;
  border-top: 1px solid #d9d9d9;
  background: #f1f1f1;
}

.combo {
  display: flex;
  align-items: center;
  width: 98px;
  height: 22px;
  padding-right: 5px;
  border: 1px solid #e2e2e2;
  border-radius: 2px;
  background: #fff;
}

.combo.first {
  margin-left: -9px;
}

.combo.offset {
  width: 57px;
}

.combo select {
  flex: 1;
  min-width: 0;
  padding-left: 3px;
  appearance: none;
}

.combo.offset select {
  padding-left: 2px;
}

.rotate {
  display: flex;
  align-items: center;
  gap: 3px;
}

input[type='checkbox'] {
  width: 14px;
  height: 14px;
  border: 1px solid #888;
  border-radius: 2px;
  background: #fff;
  appearance: none;
}

.field {
  display: flex;
  align-items: center;
  color: #888;
}

.angle {
  width: 79px;
  height: 22px;
  padding-left: 3px;
  border: 1px solid #ccc;
  border-radius: 2px;
  background: #e4e4e4;
}

.spin {
  position: relative;
  width: 60px;
  height: 22px;
  margin-right: 1px;
  background: #fff;
}

.spin input {
  width: 48px;
  height: 22px;
  padding-left: 3px;
}

.spin i {
  position: absolute;
  right: 3px;
  border: 3px solid transparent;
}

.spin .up {
  top: 4px;
  border-top: 0;
  border-bottom-color: #555;
}

.spin .down {
  bottom: 4px;
  border-bottom: 0;
  border-top-color: #555;
}

/* Work area */
.work {
  display: flex;
  flex: 1;
  min-height: 0;
  background: #f7f7f7;
}

.strip {
  display: flex;
  flex: none;
  justify-content: flex-end;
  align-items: center;
  height: 12px;
  padding-right: 3px;
  border-bottom: 1px solid #d5d5d5;
  background: #e6e6e6;
}

.close {
  position: relative;
  width: 9px;
  height: 9px;
}

.close::before,
.close::after {
  content: '';
  position: absolute;
  top: 4px;
  left: -1px;
  width: 10px;
  height: 1px;
  background: #888;
  transform: rotate(45deg);
}

.close::after {
  transform: rotate(-45deg);
}

.nav {
  display: flex;
  flex: none;
  flex-direction: column;
  width: 160px;
  border-right: 1px solid #d5d5d5;
  background: #fff;
}

.nav-head {
  height: 21px;
  padding-top: 2px;
  border-bottom: 1px solid #ddd;
  background: #f2f2f2;
  color: #777;
  text-indent: -3px;
}

.nav-tools {
  display: flex;
  align-items: center;
  gap: 4px;
  height: 28px;
  border-bottom: 1px solid #ddd;
}

.plus {
  width: 14px;
  color: #1a73e8;
}

.toggle {
  display: flex;
  align-items: center;
  justify-content: center;
  width: 24px;
  height: 22px;
  border-radius: 3px;
  background: #c2daf3;
}

.nav-list {
  position: relative;
  flex: 1;
  min-height: 0;
  overflow: hidden;
  border-bottom: 1px solid #ddd;
}

.nav-items {
  display: flex;
  flex-direction: column;
  gap: 3px;
  width: 145px;
  padding-top: 4px;
}

.nav-items a {
  display: flex;
  flex: none;
  align-items: center;
  height: 25px;
  color: #333;
  text-decoration: none;
}

.item {
  gap: 14px;
  padding-left: 5px;
}

.nav-items .cat {
  background: #ebebeb;
}

.cat span {
  margin-left: -8px;
}

.cat em {
  margin-left: auto;
  padding: 3px 4px 3px 7px;
  border-radius: 2px 0 0 2px;
  background: #0a84ea;
  color: #fff;
  font-style: normal;
}

.cat b {
  align-self: flex-start;
  width: 6px;
  height: 6px;
  margin-top: 2px;
  border-radius: 50%;
  background: #f00;
}

.item.sel {
  background: #d4e8ff;
}

.thumb {
  position: absolute;
  width: 8px;
  border-radius: 4px;
  background: #cdcdcd;
}

.nav-thumb {
  top: 325px;
  right: 3px;
  bottom: 58px;
}

.middle {
  display: flex;
  flex: none;
  flex-direction: column;
  gap: 4px;
  width: 434px;
  margin-left: 4px;
}

.panel {
  display: flex;
  flex-direction: column;
  border: 1px solid #d5d5d5;
  border-top: 0;
  background: #fff;
}

.tree-panel {
  flex: 1;
  min-height: 0;
}

.prop-panel {
  flex: none;
}

.panel-tabs {
  display: flex;
  flex: none;
  height: 23px;
  border-bottom: 1px solid #d5d5d5;
  background: #f1f1f1;
}

.panel-tabs button {
  width: 65px;
  border-right: 1px solid #bfc3cc;
  background: #e0e0e0;
  color: #888;
}

.panel-tabs .cur {
  background: #f5f5f5;
  color: #333;
  font-weight: bold;
}

.tools {
  display: flex;
  flex: none;
  align-items: center;
  justify-content: space-between;
  height: 28px;
  padding-left: 4px;
  border-bottom: 1px solid #e0e0e0;
}

.tools button {
  display: flex;
  align-items: center;
  gap: 5px;
}

.tools .more {
  gap: 0;
  height: 20px;
  border: 1px solid #eee;
  border-radius: 2px;
}

.more i {
  border: 3px solid transparent;
  border-left: 4px solid #444;
  border-right: 0;
}

.tree-search {
  display: flex;
  flex: none;
  align-items: center;
  height: 19px;
  padding: 0 7px 0 2px;
  border-bottom: 1px solid #e0e0e0;
}

.tree-search input {
  flex: 1;
}

.tree-search input::placeholder {
  color: #999;
}

.tree {
  margin: 0;
  padding: 2px 0 0;
  list-style: none;
}

.tree li {
  display: flex;
  align-items: center;
  gap: 3px;
  height: 24px;
}

.fold {
  border: 3px solid transparent;
  border-top: 5px solid #777;
  border-bottom: 0;
}

.fold.none {
  visibility: hidden;
}

.l0 {
  padding-left: 14px;
}

.l1 {
  padding-left: 34px;
}

.l2 {
  padding-left: 60px;
}

.picked {
  padding: 3px 6px 2px 4px;
  border-radius: 2px;
  background: #c2daf3;
}

/* Property table */
.prop-wrap {
  position: relative;
}

table {
  border-collapse: collapse;
  table-layout: fixed;
}

.props {
  width: 416px;
}

.c-no {
  width: 22px;
}

.c-name {
  width: 104px;
}

.c-val {
  width: 250px;
}

.c-add {
  width: 40px;
}

.props tr {
  height: 21px;
}

.props th,
.props td {
  height: 21px;
  padding: 0 3px;
  border: 1px solid #d4d4d4;
  line-height: 16px;
  white-space: nowrap;
  overflow: hidden;
}

.props tr > :first-child {
  border-left: 0;
}

.props th {
  border-top: 0;
  font-weight: normal;
}

.props th.hot,
.dlg-grid th.hot {
  border-color: #66a5e8;
  background: #80baf8;
  color: #fff;
  font-weight: bold;
}

.props .no {
  padding: 0;
  border-right-color: #b5b5b5;
  background: #eee;
  text-align: center;
}

.props .blue {
  color: #1a5cff;
}

.props .grey {
  color: #888;
}

.props .child {
  position: relative;
  padding-left: 31px;
}

.child::before {
  content: '';
  position: absolute;
  top: 0;
  bottom: 0;
  left: 8px;
  border-left: 1px solid #ccc;
}

.child.last::before {
  bottom: 10px;
}

.child::after {
  content: '';
  position: absolute;
  top: 10px;
  left: 8px;
  width: 17px;
  border-top: 1px solid #ccc;
}

.box {
  display: inline-block;
  width: 13px;
  height: 13px;
  margin-right: 5px;
  border: 1px solid #777;
  border-radius: 2px;
  font-style: normal;
  line-height: 10px;
  text-align: center;
  vertical-align: 0;
}

.props .current .no {
  background: #80baf8;
  color: #fff;
  font-weight: bold;
}

.props .current .val {
  border: 2px solid #66a5e8;
}

.dots {
  display: flex;
  align-items: center;
  justify-content: center;
  gap: 2px;
  width: 16px;
  height: 13px;
  margin-left: auto;
  border: 1px solid #4a90e2;
  border-radius: 2px;
  background: #e4f0fd;
}

.dots s {
  width: 2px;
  height: 2px;
  background: #1a73e8;
}

.add input {
  display: block;
  margin: 0 auto 0 9px;
}

.prop-thumb {
  top: 20px;
  right: 2px;
  bottom: 32px;
}

.prop-foot {
  height: 30px;
  padding: 4px 5px 0;
}

.plain {
  width: 80px;
  height: 24px;
  border: 1px solid #c8c8c8;
  border-radius: 3px;
  background: #fff;
}

/* Canvas */
.canvas {
  position: relative;
  flex: 1;
  min-width: 0;
  margin-left: 4px;
  overflow: hidden;
  background: #000;
}

.drawing {
  position: absolute;
  width: 100%;
  height: 100%;
}

.drawing text {
  font-family: 'Noto Sans', sans-serif;
  text-anchor: middle;
  fill: #fff;
}

.drawing .ucs {
  font-size: 13px;
  fill: #0f0;
}

.drawing .ucs:last-child {
  fill: #f00;
}

.drawing .big-t {
  font-size: 17px;
}

.drawing .tiny {
  font-size: 6px;
  font-weight: bold;
}

.drawing .one {
  font-size: 9px;
  font-weight: normal;
}

.drawing .red-t {
  font-size: 8px;
  fill: #f66;
}

.frame {
  fill: none;
  stroke: #6b3232;
}

.dim,
.bubbles {
  fill: none;
  stroke: #00d000;
}

.bubbles path {
  stroke: #008000;
}

.bubbles text {
  stroke: none;
}

.dim-dark {
  fill: none;
  stroke: #006800;
}

.yellow {
  fill: none;
  stroke: #e0e000;
}

.white {
  fill: none;
  stroke: #ddd;
}

.thick {
  stroke-width: 2;
}

.red {
  fill: none;
  stroke: #d00000;
}

.blue {
  fill: none;
  stroke: #0000e0;
}

.magenta {
  fill: none;
  stroke: #c000c0;
}

.cyan {
  fill: none;
  stroke: #00d8e0;
  stroke-dasharray: 5 2;
}

.teal {
  fill: none;
  stroke: #00628a;
  stroke-dasharray: 5 2;
}

.hint {
  position: absolute;
  right: 0;
  bottom: 0;
  left: 0;
  display: flex;
  align-items: center;
  justify-content: center;
  gap: 4px;
  height: 28px;
  background: rgba(48, 48, 48, 0.82);
  color: #fff;
}

.side-tools {
  position: absolute;
  top: 0;
  right: 0;
  display: flex;
  flex-direction: column;
  align-items: center;
  width: 33px;
  padding: 7px 0 8px;
  border: 1px solid #d8d8d8;
  border-radius: 3px;
  background: #fff;
}

.side-tools button {
  display: flex;
  align-items: center;
  height: 29px;
}

.side-tools .arrow {
  margin: 3px 0;
}

.side-tools hr {
  width: 23px;
  margin: 2px 0;
  border: 0;
  border-top: 1px solid #555;
}

/* Dialog */
.dialog {
  position: absolute;
  top: 352px;
  left: 565px;
  width: 672px;
  height: 330px;
  padding: 0 11px;
  border: 1px solid #bcbcbc;
  background: linear-gradient(90deg, #fff 0, #fdfdfd 20px, #e3e3e3 52px, #e6e6e6 50%, #e9e9e9 100%);
  box-shadow: 0 0 4px rgba(0, 0, 0, 0.2);
}

.dlg-head {
  display: flex;
  align-items: center;
  justify-content: space-between;
  height: 38px;
  padding-right: 3px;
  font-size: 14px;
}

.dlg-close::before,
.dlg-close::after {
  left: -2px;
  width: 14px;
}

.dlg-label {
  height: 24px;
  line-height: 19px;
}

.dlg-grid {
  height: 223px;
  border: 1px solid #c0c0c0;
  background: #fff;
}

.dlg-grid table {
  width: 615px;
}

.dlg-grid th,
.dlg-grid td {
  height: 21px;
  padding: 0 3px;
  border: 1px solid #d0d0d0;
}

.dlg-grid tr > :first-child {
  border-left: 0;
}

.dlg-grid th {
  height: 20px;
  border-top: 0;
  border-color: #c0c0c0;
  background: #eee;
  font-weight: normal;
}

.g-no {
  width: 21px;
}

.g-a {
  width: 81px;
}

.g-b {
  width: 65px;
}

.g-c {
  width: 201px;
}

.g-d {
  width: 101px;
}

.dlg-grid .r1 td {
  height: 36px;
}

.dlg-grid .no {
  padding: 0;
  background: #eee;
  text-align: center;
}

.dlg-grid .no.hot {
  background: #80baf8;
  color: #fff;
  font-weight: bold;
}

.shape {
  text-align: center;
}

.shape span {
  display: block;
  color: #f00;
  font-family: 'Liberation Serif', serif;
  font-size: 14px;
  line-height: 14px;
}

.shape hr {
  width: 180px;
  margin: 0 0 0 14px;
  border: 0;
  border-top: 2px solid #000;
}

.dlg-grid .edit {
  border: 2px solid #66a5e8;
  background: #d4e8ff;
}

.dlg-foot {
  display: flex;
  gap: 6px;
  padding-top: 6px;
}

.dlg-foot .plain {
  height: 26px;
}

.dlg-foot .ok {
  margin-left: auto;
  border-color: #2a7de1;
  background: #2a7de1;
  color: #fff;
}

.grip {
  position: absolute;
  right: 2px;
  bottom: 2px;
}

.scribble {
  position: absolute;
  top: -3px;
  left: 529px;
}
</style>
